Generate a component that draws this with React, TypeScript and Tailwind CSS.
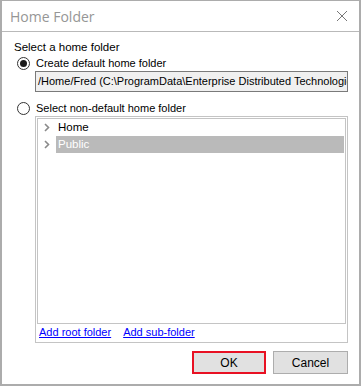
import React from 'react'

const font = { fontFamily: '"Liberation Sans", Arial, sans-serif' }

function Radio({ checked }: { checked?: boolean }) {
  return (
    <span className="w-[13px] h-[13px] rounded-full border border-[#333] bg-white flex items-center justify-center shrink-0">
      {checked && <span className="w-[7px] h-[7px] rounded-full bg-[#1a1a1a]" />}
    </span>
  )
}

function Chevron() {
  return (
    <svg width="6" height="9" viewBox="0 0 6 9" className="shrink-0">
      <path d="M1 1 L4.5 4.5 L1 8" fill="none" stroke="#8a8a8a" strokeWidth="1.6" />
    </svg>
  )
}

export default function App() {
  return (
    <div
      className="w-[361px] h-[386px] bg-white border-t border-x-2 border-b-2 border-[#acacac] flex flex-col text-[11.5px] text-black"
      style={font}
    >
      <div className="h-[30px] flex items-center justify-between pl-[8px] pr-[8px] shrink-0">
        <span className="text-[14px] text-[#969696]" style={{ fontFamily: '"Open Sans", "Noto Sans", sans-serif' }}>
          Home Folder
        </span>
        <svg width="12" height="12" viewBox="0 0 12 12" className="mr-[3px]">
          <path d="M1 1 L11 11 M11 1 L1 11" stroke="#777" strokeWidth="1" />
        </svg>
      </div>
      <div className="flex-1 border-t border-[#b9b9b9] flex flex-col pl-[12px] pr-[11px] pt-[8px]">
        <div className="leading-[14px]">Select a home folder</div>
        <label className="flex items-center gap-[6px] mt-[1px] h-[16px] pl-[3px]">
          <Radio checked />
          <span className="leading-[14px] text-[11px]">Create default home folder</span>
        </label>
        <div className="ml-[21px] h-[21px] border border-[#7a7a7a] bg-[#f0f0f0] flex items-center pl-[2px] overflow-hidden whitespace-nowrap text-[11px]">
          /Home/Fred (C:\ProgramData\Enterprise Distributed Technologies\Home)
        </div>
        <label className="flex items-center gap-[6px] mt-[8px] h-[16px] pl-[3px]">
          <Radio />
          <span className="leading-[14px] text-[11px]">Select non-default home folder</span>
        </label>
        <div className="ml-[21px] h-[227px] border border-[#c4c4c4] p-[1px] flex flex-col">
          <div className="flex-1 border border-[#c4c4c4] pr-[1px] flex flex-col">
            <div className="h-[17px] flex items-center pl-[6px] gap-[7px]">
              <Chevron />
              <span className="px-[1px]">Home</span>
            </div>
            <div className="h-[17px] flex items-center pl-[6px] gap-[6px]">
              <Chevron />
              <span className="flex-1 h-full bg-[#bababa] text-white flex items-center px-[2px]">Public</span>
            </div>
          </div>
          <div className="h-[15px] flex items-center gap-[12px] pl-[2px] mb-[1px] mt-[1px] text-[11px]">
            <span className="text-[#0000ff] underline">Add root folder</span>
            <span className="text-[#0000ff] underline">Add sub-folder</span>
          </div>
        </div>
        <div className="flex justify-end gap-[7px] mt-[8px]">
          <button className="w-[74px] h-[23px] bg-[#e1e1e1] border-2 border-[#e81123] text-[12px]" style={font}>
            OK
          </button>
          <button className="w-[75px] h-[23px] bg-[#e1e1e1] border border-[#adadad] text-[12px]" style={font}>
            Cancel
          </button>
        </div>
      </div>
    </div>
  )
}
